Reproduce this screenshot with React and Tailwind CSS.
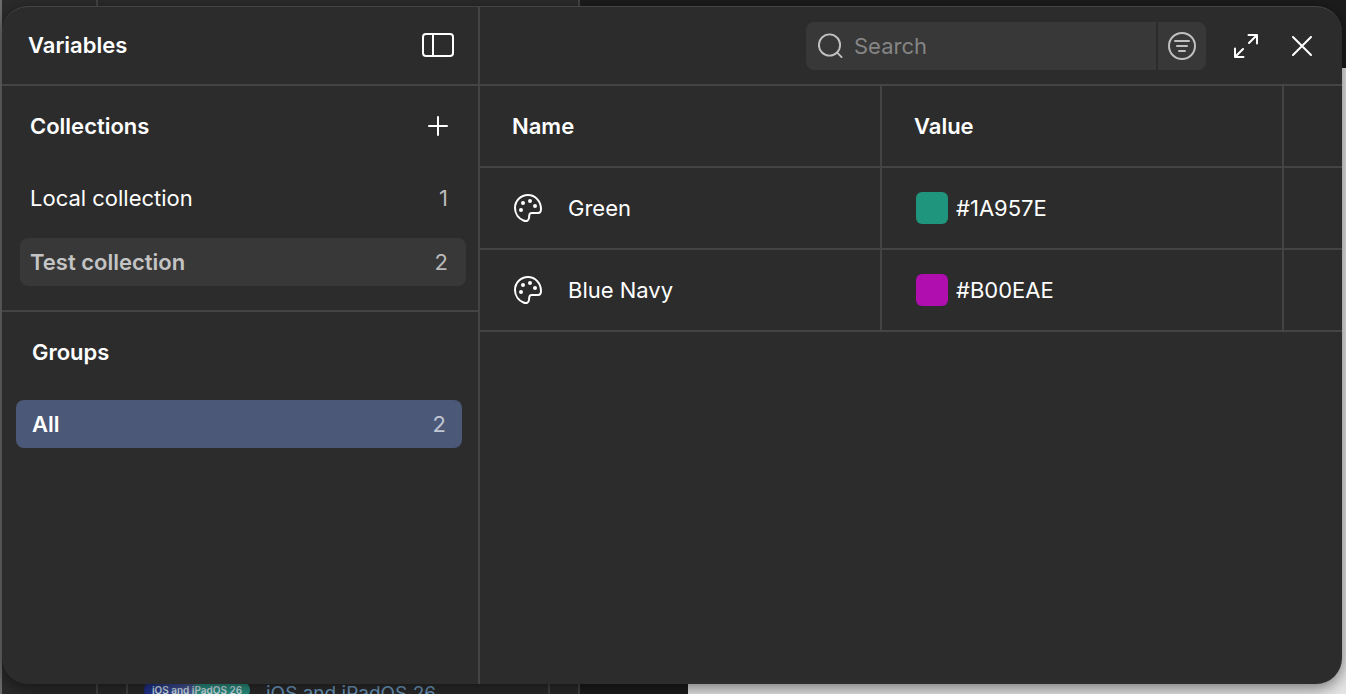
import { useState } from "react"

const COLLECTIONS = [
  { id: "local", label: "Local collection", count: 1 },
  { id: "test", label: "Test collection", count: 2 },
]

const VARIABLES = [
  { id: "green", name: "Green", value: "#1A957E", swatch: "bg-[#1f957e]" },
  { id: "navy", name: "Blue Navy", value: "#B00EAE", swatch: "bg-[#b00eae]" },
]

function SidebarIcon() {
  return (
    <svg width="32" height="24" viewBox="0 0 32 24" fill="none" stroke="currentColor" strokeWidth="2">
      <rect x="1" y="1" width="30" height="22" rx="3" />
      <path d="M11 1v22" />
    </svg>
  )
}

function PlusIcon() {
  return (
    <svg width="20" height="20" viewBox="0 0 20 20" fill="none" stroke="currentColor" strokeWidth="2" strokeLinecap="round">
      <path d="M10 1v18M1 10h18" />
    </svg>
  )
}

function SearchIcon() {
  return (
    <svg className="shrink-0" width="26" height="26" viewBox="0 0 26 26" fill="none" stroke="currentColor" strokeWidth="1.9" strokeLinecap="round">
      <circle cx="11.500" cy="12" r="10.600" />
      <path d="M19.400 19.900 23.600 24.100" />
    </svg>
  )
}

function FilterIcon() {
  return (
    <svg width="28" height="28" viewBox="0 0 28 28" fill="none" stroke="currentColor" strokeWidth="2" strokeLinecap="round">
      <circle cx="14" cy="14" r="13" />
      <path d="M7 9h14M9 14h10M11 19h6" />
    </svg>
  )
}

function ExpandIcon() {
  return (
    <svg width="24" height="24" viewBox="0 0 24 24" fill="none" stroke="currentColor" strokeWidth="2" strokeLinecap="round" strokeLinejoin="round">
      <path d="M14.500 1H23v8.500M23 1l-8 8M1 14.500V23h8.500M1 23l8-8" />
    </svg>
  )
}

function CloseIcon() {
  return (
    <svg width="20" height="20" viewBox="0 0 20 20" fill="none" stroke="currentColor" strokeWidth="2" strokeLinecap="round">
      <path d="m1 1 18 18M19 1 1 19" />
    </svg>
  )
}

function PaletteIcon() {
  return (
    <svg width="28" height="28" viewBox="0 0 28 28" fill="none" stroke="currentColor" strokeWidth="2" strokeLinejoin="round">
      <path d="M14 1C6.800 1 1 6.800 1 14c0 6.200 4 10.700 8.500 12.500 3 1.200 5.100.3 5.500-2.700l.3-2.600c.2-1.500 1-2.200 2.500-2.200H24c2 0 3-1.300 3-4C27 7.200 21.200 1 14 1Z" />
      <g fill="currentColor" stroke="none">
        <circle cx="7" cy="16" r="2" />
        <circle cx="9" cy="9" r="2" />
        <circle cx="16" cy="7" r="2" />
        <circle cx="21" cy="12" r="2" />
      </g>
    </svg>
  )
}

function Backdrop() {
  return (
    <div aria-hidden="true" className="absolute inset-0 flex overflow-hidden bg-[#1c1c1c]">
      <div className="flex w-[580px] shrink-0 border-r-2 border-l-2 border-r-[#444444] border-l-[#6c6c6c] bg-[#2b2b2b]">
        <div className="w-24 shrink-0 border-r-2 border-[#444444]" />
        <div className="flex min-w-0 flex-1 items-end px-7">
          <div className="-mb-3 flex flex-1 items-start gap-4 border-x-2 border-[#444444] px-4">
            <div className="w-[106px] shrink-0 rounded-lg bg-linear-to-r from-[#1f2f8c] via-[#4d5b9c] via-45% to-[#2b9384] to-50% text-center text-[10px] leading-4 font-semibold whitespace-nowrap text-[#d5e6ee]">
              iOS and iPadOS 26
            </div>
            <span className="text-[19px] leading-6 whitespace-nowrap text-[#6f9cc4]">iOS and iPadOS 26</span>
          </div>
        </div>
      </div>
      <div className="w-[108px] shrink-0" />
      <div className="mt-[68px] flex-1 bg-[#e6e6e6]" />
    </div>
  )
}

function Sidebar() {
  const [active, setActive] = useState("test")

  return (
    <aside className="w-[478px] shrink-0 border-r-2 border-[#444444]">
      <header className="flex h-[79px] items-center justify-between border-b-2 border-[#444444] pr-6 pb-[2px] pl-[26px]">
        <h1 className="font-semibold">Variables</h1>
        <button type="button" aria-label="Toggle sidebar">
          <SidebarIcon />
        </button>
      </header>

      {/* Collections */}
      <section className="border-b-2 border-[#444444] pb-6">
        <div className="flex h-20 items-center justify-between pr-[30px] pl-7">
          <h2 className="font-semibold">Collections</h2>
          <button type="button" aria-label="Add collection">
            <PlusIcon />
          </button>
        </div>
        <ul className="flex flex-col gap-4 pt-2 pr-3 pl-[18px]">
          {COLLECTIONS.map((item) => (
            <li key={item.id}>
              <button
                type="button"
                onClick={() => setActive(item.id)}
                className={`flex h-12 w-full items-center justify-between rounded-lg pr-[18px] pl-[10px] ${
                  active === item.id ? "bg-[#383838] font-semibold text-[#c4c4c4]" : "text-white"
                }`}
              >
                <span>{item.label}</span>
                <span className="font-normal text-[#bababa]">{item.count}</span>
              </button>
            </li>
          ))}
        </ul>
      </section>

      {/* Groups */}
      <section>
        <div className="flex h-20 items-center px-[30px]">
          <h2 className="font-semibold">Groups</h2>
        </div>
        <div className="pt-2 pr-4 pl-[14px]">
          <button type="button" className="flex h-12 w-full items-center justify-between rounded-lg bg-[#4b5878] px-4">
            <span className="font-semibold">All</span>
            <span className="text-[#c1c6d3]">2</span>
          </button>
        </div>
      </section>
    </aside>
  )
}

function Toolbar({ query, onQuery }) {
  return (
    <header className="flex h-[79px] items-center justify-end gap-7 border-b-2 border-[#444444] pr-[30px]">
      <div className="flex h-12 gap-[2px] overflow-hidden rounded-lg">
        <label className="flex w-[350px] items-center gap-[10px] bg-[#383838] pl-3 text-[#c0c0c0]">
          <SearchIcon />
          <input
            type="text"
            aria-label="Search"
            placeholder="Search"
            value={query}
            onChange={(e) => onQuery(e.target.value)}
            className="w-full min-w-0 bg-transparent pr-3 text-white outline-none placeholder:text-[#858585]"
          />
        </label>
        <button type="button" aria-label="Filter" className="flex w-12 items-center justify-center bg-[#383838] text-[#c0c0c0]">
          <FilterIcon />
        </button>
      </div>
      <div className="flex items-center gap-[34px]">
        <button type="button" aria-label="Expand">
          <ExpandIcon />
        </button>
        <button type="button" aria-label="Close">
          <CloseIcon />
        </button>
      </div>
    </header>
  )
}

function VariablesTable({ rows }) {
  return (
    <table className="w-full table-fixed border-separate border-spacing-0 text-left">
      <colgroup>
        <col className="w-[402px]" />
        <col className="w-[402px]" />
        <col />
      </colgroup>
      <thead>
        <tr className="h-[82px]">
          <th scope="col" className="border-r-2 border-b-2 border-[#444444] px-8 font-semibold">Name</th>
          <th scope="col" className="border-r-2 border-b-2 border-[#444444] px-8 font-semibold">Value</th>
          <td className="border-b-2 border-[#444444]" />
        </tr>
      </thead>
      <tbody>
        {rows.map((row) => (
          <tr key={row.id} className="h-[82px]">
            <td className="border-r-2 border-b-2 border-[#444444] px-[34px]">
              <div className="flex items-center gap-[26px]">
                <PaletteIcon />
                <span>{row.name}</span>
              </div>
            </td>
            <td className="border-r-2 border-b-2 border-[#444444] px-[34px]">
              <div className="flex items-center gap-2">
                <span className={`size-8 rounded-md ${row.swatch}`} />
                <span>{row.value}</span>
              </div>
            </td>
            <td className="border-b-2 border-[#444444]" />
          </tr>
        ))}
      </tbody>
    </table>
  )
}

export default function App() {
  const [query, setQuery] = useState("")
  const rows = VARIABLES.filter((v) => v.name.toLowerCase().includes(query.toLowerCase()))

  return (
    <div className="relative flex min-h-screen flex-col pt-[6px] pr-1 pb-[10px] pl-[2px] font-[Inter,sans-serif] text-[22px] leading-8 text-white">
      <Backdrop />
      <div className="relative flex flex-1 overflow-hidden rounded-[26px] border-t border-[#444444] bg-[#2c2c2c] shadow-[0_4px_16px_rgba(0,0,0,0.5)]">
        <Sidebar />
        <main className="min-w-0 flex-1">
          <Toolbar query={query} onQuery={setQuery} />
          <VariablesTable rows={rows} />
        </main>
      </div>
    </div>
  )
}
